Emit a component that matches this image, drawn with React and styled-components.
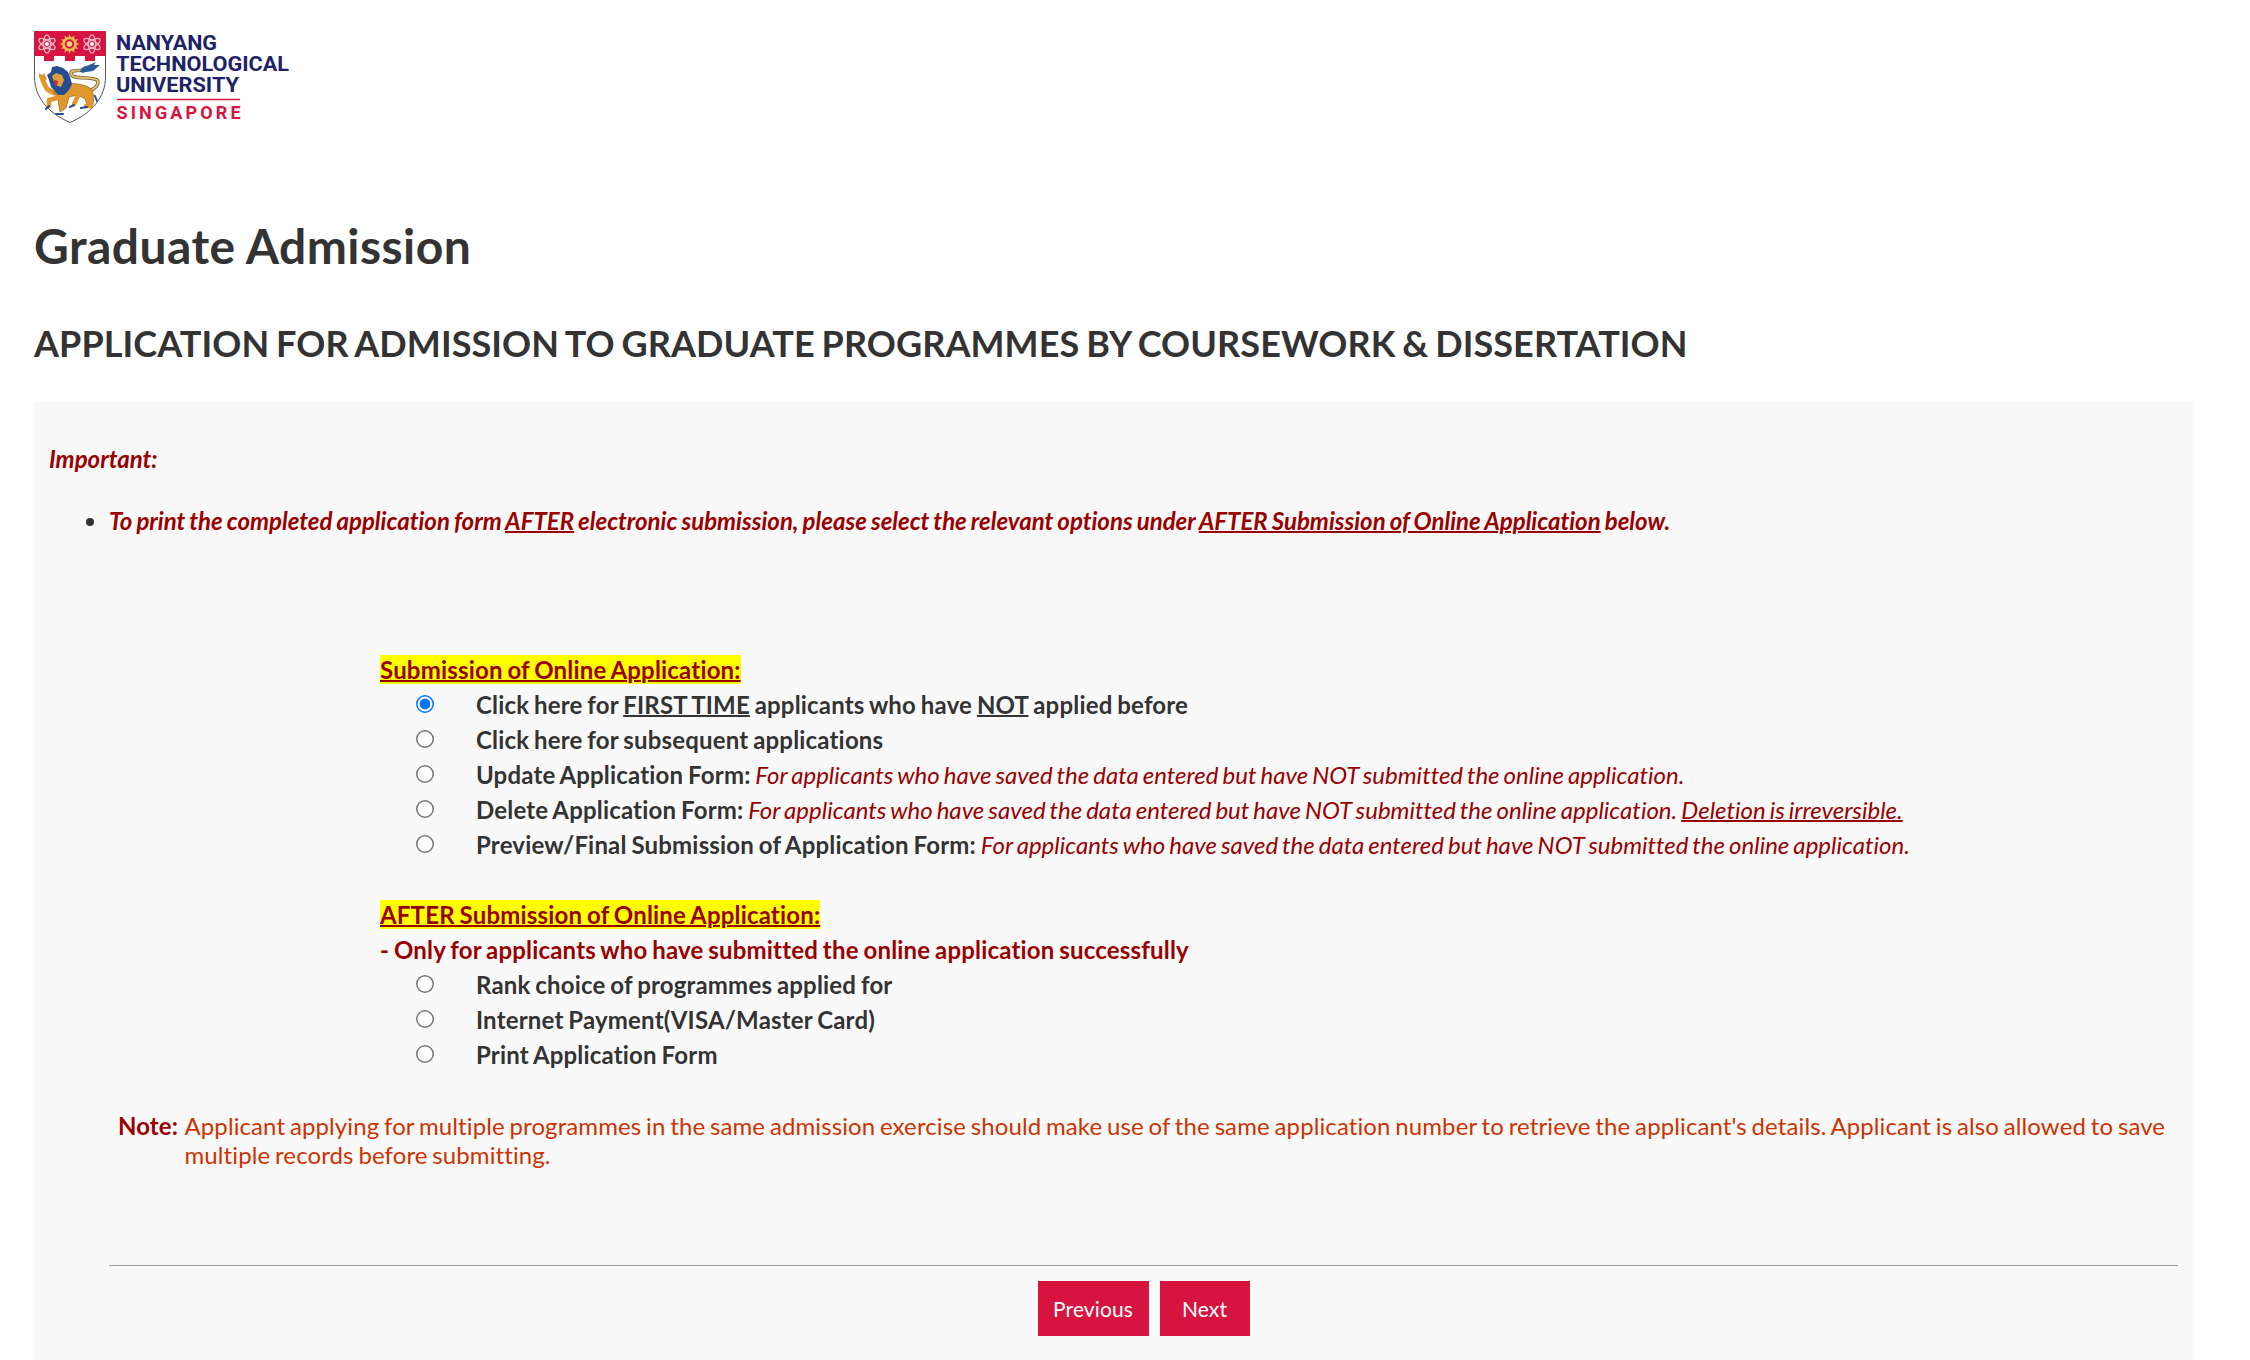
import React, { useState } from "react";
import styled, { createGlobalStyle } from "styled-components";

const GlobalStyle = createGlobalStyle`
  * { box-sizing: border-box; }
  html, body { margin: 0; background: #fff; }
  body {
    height: 1360px;
    overflow: hidden;
    font-family: "Lato", "Liberation Sans", sans-serif;
    font-size: 24px;
    line-height: 29px;
    font-variant-ligatures: none;
    word-spacing: -1.2px;
    color: #333;
  }
`;

const Page = styled.div`
  display: flex;
  flex-direction: column;
  height: 1360px;
  padding: 30px 56px 0 34px;
`;

const Logo = styled.svg`
  display: block;
  width: 260px;
  height: 94px;
  flex: none;
  letter-spacing: 0;
  word-spacing: 0;
`;

const Title = styled.h1`
  margin: 93px 0 0;
  font-size: 48px;
  line-height: 58px;
  font-weight: 700;
  letter-spacing: 0.45px;
  word-spacing: -0.5px;
`;

const Subtitle = styled.h2`
  margin: 46px 0 0;
  font-size: 36px;
  line-height: 44px;
  font-weight: 700;
  letter-spacing: 0.08px;
  word-spacing: -2px;
`;

const Panel = styled.main`
  flex: 1;
  margin-top: 36px;
  padding: 43px 16px 0 15px;
  background: #f9f9f9;
`;

const Important = styled.p`
  margin: 0;
  color: #900;
  font-weight: 700;
  font-style: italic;
`;

const Notices = styled.ul`
  margin: 33px 0 0;
  padding-left: 60px;
`;

const Underline = styled.span`
  text-decoration: underline;
  text-decoration-thickness: 2px;
`;

const Options = styled.form`
  display: flex;
  flex-direction: column;
  gap: 35px;
  margin: 117px 0 0 331px;
  font-weight: 700;
  letter-spacing: 0.18px;
  line-height: 35px;
`;

const Group = styled.section`
  display: flex;
  flex-direction: column;
`;

const GroupTitle = styled.div`
  color: #900;
`;

const Mark = styled(Underline)`
  background: #ff0;
`;

const Option = styled.label`
  display: grid;
  grid-template-columns: 96px 1fr;
  height: 35px;
`;

const Radio = styled.input`
  zoom: 1.5;
  width: 12px;
  height: 12px;
  margin: 5.34px 0 0 24px;
`;

const Hint = styled.em`
  color: #900;
  font-weight: 400;
  letter-spacing: 0;
  word-spacing: -1.6px;
`;

const Note = styled.div`
  display: grid;
  grid-template-columns: 66.5px 1fr;
  margin: 39px 0 0 69px;
  color: #c30;
  letter-spacing: 0.1px;
  word-spacing: -1.45px;
`;

const NoteLabel = styled.strong`
  color: #900;
`;

const Rule = styled.hr`
  height: 1px;
  margin: 96px 0 0 60px;
  border: 0;
  background: #999;
`;

const Actions = styled.div`
  display: flex;
  justify-content: center;
  gap: 11px;
  margin: 15px 0 0 60px;
`;

const Button = styled.button`
  width: ${(p) => p.$width}px;
  height: 55px;
  padding: 0;
  border: 0;
  background: #d71440;
  color: #fff;
  font: 400 21px/55px "Lato", "Liberation Sans", sans-serif;
  letter-spacing: 0.1px;
`;

const saved = "For applicants who have saved the data entered but have NOT submitted the online application.";

const submission = [
  ["first", <>Click here for <Underline>FIRST TIME</Underline> applicants who have <Underline>NOT</Underline> applied before</>],
  ["subsequent", "Click here for subsequent applications"],
  ["update", <>Update Application Form: <Hint>{saved}</Hint></>],
  ["delete", <>Delete Application Form: <Hint>{saved} <Underline>Deletion is irreversible.</Underline></Hint></>],
  ["preview", <>Preview/Final Submission of Application Form: <Hint>{saved}</Hint></>],
];

const afterSubmission = [
  ["rank", "Rank choice of programmes applied for"],
  ["payment", "Internet Payment(VISA/Master Card)"],
  ["print", "Print Application Form"],
];

function Atom({ x, y }) {
  return (
    <g transform={`translate(${x} ${y})`} fill="none" stroke="#f7b9c6" strokeWidth="1.200">
      {[0, 60, 120].map((a) => (
        <ellipse key={a} rx="9.200" ry="3.600" transform={`rotate(${a + 30})`} />
      ))}
      <circle r="2" fill="#fff" stroke="none" />
    </g>
  );
}

function UniversityLogo() {
  return (
    <Logo viewBox="0 0 260 94" role="img" aria-label="Nanyang Technological University Singapore">
      <path d="M.5 1.5H71.500V47C71.500 67 58 83 36 92.500C14 83 .5 67 .5 47Z" fill="#fff" stroke="#555" />
      <path d="M.5 1H71.500V26H61V31H51V26H41V31H31V26H20V31H10V26H.5Z" fill="#d71440" />
      <Atom x={13} y={14} />
      <Atom x={58} y={14} />
      <g transform="translate(35.500 14)">
        {Array.from({ length: 12 }, (_, i) => (
          <path key={i} d="M-1.500 -6L0 -10L1.500 -6Z" fill="#e9b34b" transform={`rotate(${i * 30})`} />
        ))}
        <circle r="6" fill="#d71440" stroke="#eebc4e" strokeWidth="2.600" />
        <circle r="2.800" fill="#f6d38b" />
      </g>
      <g strokeLinecap="round" strokeLinejoin="round" fill="none">
        <path d="M55 60C61 60 66 53 63 50C57 46 39 50 37 44C36 38 45 43 55 38" stroke="#6f5a2c" strokeWidth="3.400" />
        <path d="M55 60C61 60 66 53 63 50C57 46 39 50 37 44C36 38 45 43 55 38" stroke="#e8c27a" strokeWidth="1.900" />
        <path d="M46 41L49 37L55 35L62 32L60 35L66 35L59 41L52 42L48 43Z" fill="#2b5aa0" />
        <path d="M20 63L13 59L9 51" stroke="#e0982c" strokeWidth="5" />
        <path d="M5 47L5 43L8 45L10 43L13 49L8 53Z" fill="#e0982c" />
        <path d="M27 55C36 52 46 54 52 56C61 59 60 67 59 75L54 77L51 69L44 65L35 67L32 78L26 82L24 70L20 61Z" fill="#e0982c" stroke="#8a6427" strokeWidth=".7" />
        <path d="M23 68L15 70L15 76M53 64L57 76L52 76M45 64L40 74" stroke="#e0982c" strokeWidth="4.500" />
        <path d="M12 79L15 76M22 84L29 84M36 77L40 75M47 78L53 77M61 66L63 71" stroke="#264f94" strokeWidth="2" />
        <path d="M18 37L23 36L29 38L34 42L36 47L38 54L35 60L30 65L24 65L20 60L17 57L15 50L13 45L17 42Z" fill="#244e91" />
        <path d="M18 46L22 43L28 45L30 50L27 57L21 55Z" fill="#df9e36" />
        <path d="M20 50L24 51L23 56L20 54Z" fill="#c62b36" />
      </g>
      <g fontFamily='"Roboto", "Liberation Sans", sans-serif' fontWeight="700" fontSize="20.800" fill="#202266">
        <text x="82" y="19.800" textLength="101" lengthAdjust="spacingAndGlyphs">NANYANG</text>
        <text x="82" y="41" textLength="173" lengthAdjust="spacingAndGlyphs">TECHNOLOGICAL</text>
        <text x="82" y="62.300" textLength="123" lengthAdjust="spacingAndGlyphs">UNIVERSITY</text>
        <text x="82.500" y="89" fontSize="18" textLength="124" lengthAdjust="spacing" fill="#d71440">SINGAPORE</text>
      </g>
      <path d="M83 69.500H206" stroke="#d71440" strokeWidth="1.500" />
    </Logo>
  );
}

export default function App() {
  const [choice, setChoice] = useState("first");
  const renderOptions = (items) =>
    items.map(([id, label]) => (
      <Option key={id}>
        <Radio type="radio" name="option" checked={choice === id} onChange={() => setChoice(id)} />
        <span>{label}</span>
      </Option>
    ));

  return (
    <>
      <GlobalStyle />
      <Page>
        <UniversityLogo />
        <Title>Graduate Admission</Title>
        <Subtitle>APPLICATION FOR ADMISSION TO GRADUATE PROGRAMMES BY COURSEWORK &amp; DISSERTATION</Subtitle>
        <Panel>
          <Important>Important:</Important>
          <Notices>
            <li>
              <Important as="span">
                To print the completed application form <Underline>AFTER</Underline> electronic submission, please
                select the relevant options under <Underline>AFTER Submission of Online Application</Underline> below.
              </Important>
            </li>
          </Notices>
          <Options>
            <Group>
              <GroupTitle><Mark>Submission of Online Application:</Mark></GroupTitle>
              {renderOptions(submission)}
            </Group>
            <Group>
              <GroupTitle><Mark>AFTER Submission of Online Application:</Mark></GroupTitle>
              <GroupTitle>- Only for applicants who have submitted the online application successfully</GroupTitle>
              {renderOptions(afterSubmission)}
            </Group>
          </Options>
          <Note>
            <NoteLabel>Note:</NoteLabel>
            <span>
              Applicant applying for multiple programmes in the same admission exercise should make use of the same
              application number to retrieve the applicant's details. Applicant is also allowed to save multiple
              records before submitting.
            </span>
          </Note>
          <Rule />
          <Actions>
            <Button type="button" $width={111}>Previous</Button>
            <Button type="button" $width={90}>Next</Button>
          </Actions>
        </Panel>
      </Page>
    </>
  );
}
